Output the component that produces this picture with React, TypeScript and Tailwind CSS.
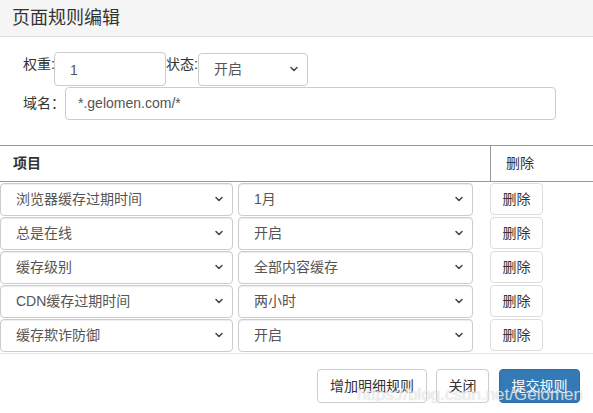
import { ChevronDown } from 'lucide-react';

const font = { fontFamily: '"Liberation Sans", "Noto Sans CJK SC", sans-serif' };

interface Rule {
  item: string;
  value: string;
}

const rules: Rule[] = [
  { item: '浏览器缓存过期时间', value: '1月' },
  { item: '总是在线', value: '开启' },
  { item: '缓存级别', value: '全部内容缓存' },
  { item: 'CDN缓存过期时间', value: '两小时' },
  { item: '缓存欺诈防御', value: '开启' },
];

// select box with a small chevron drawn over the right edge
function SelectBox({ value, className }: { value: string; className: string }) {
  return (
    <div
      className={`relative flex items-center border border-[#ccc] rounded-[4px] bg-white text-[14px] text-[#555] shadow-[inset_0_1px_1px_rgba(0,0,0,0.075)] ${className}`}
    >
      <span>{value}</span>
      <ChevronDown className="absolute right-[7px] top-1/2 -translate-y-1/2 w-[12px] h-[12px] text-[#444]" strokeWidth={3} />
    </div>
  );
}

export default function App() {
  return (
    <div className="relative w-[593px] h-[413px] bg-white text-[#333] overflow-hidden" style={font}>
      {/* Header */}
      <div className="h-[37px] bg-[#f5f5f5] border-b border-[#ddd] flex items-center pl-[12px]">
        <h2 className="text-[18px] text-[#333]">页面规则编辑</h2>
      </div>

      {/* Form */}
      <div className="pt-[15px] pl-[23px] text-[14px]">
        <div className="flex items-center">
          <span className="w-[31px] shrink-0 whitespace-nowrap -mt-[10px]">权重:</span>
          <div className="w-[112px] h-[34px] shrink-0 border border-[#ccc] rounded-[4px] flex items-center pl-[15px] pt-[2px] text-[#555]">1</div>
          <span className="w-[32px] shrink-0 whitespace-nowrap -mt-[10px]">状态:</span>
          <div className="w-[110px] h-[33px] shrink-0 border border-[#ccc] rounded-[4px] flex items-center pl-[15px] text-[#555] relative">
            开启
            <ChevronDown className="absolute right-[7px] top-1/2 -translate-y-1/2 w-[12px] h-[12px] text-[#444]" strokeWidth={3} />
          </div>
        </div>
        <div className="flex items-center mt-px">
          <span className="w-[42px] shrink-0 whitespace-nowrap">域名：</span>
          <div className="w-[491px] h-[33px] border border-[#ccc] rounded-[4px] flex items-center pl-[12px] text-[#555]">
            *.gelomen.com/*
          </div>
        </div>
      </div>

      {/* Table */}
      <div className="mt-[25px] text-[14px]">
        <div className="flex h-[37px] border-t border-b border-[#999]">
          <div className="w-[490px] flex items-center pl-[13px] font-bold">项目</div>
          <div className="flex-1 flex items-center pl-[15px] border-l border-[#999]">删除</div>
        </div>
        <div className="flex flex-col">
          {rules.map((rule) => (
            <div key={rule.item} className="flex items-center h-[34px]">
              <SelectBox value={rule.item} className="w-[233px] h-[33px] pl-[15px]" />
              <SelectBox value={rule.value} className="ml-[5px] w-[235px] h-[33px] pl-[15px]" />
              <button className="ml-[17px] w-[53px] h-[32px] border border-[#ddd] rounded-[4px] bg-white text-[14px] text-[#333]">
                删除
              </button>
            </div>
          ))}
        </div>
      </div>

      {/* Footer */}
      <div className="border-t border-[#e5e5e5] mt-px pt-[15px] pr-[13px] flex justify-end gap-[9px] text-[14px]">
        <button className="w-[110px] h-[34px] border border-[#ccc] rounded-[4px] bg-white">增加明细规则</button>
        <button className="w-[53px] h-[34px] border border-[#ccc] rounded-[4px] bg-white">关闭</button>
        <button className="ml-px w-[81px] h-[34px] border border-[#2e6da4] rounded-[4px] bg-[#337ab7] text-white">
          提交规则
        </button>
      </div>

      {/* watermark */}
      <span className="absolute right-[10px] top-[382px] text-[17px] text-white/70 [text-shadow:0_0_1px_rgba(140,140,140,0.5)] pointer-events-none">
        https://blog.csdn.net/Gelomen
      </span>
    </div>
  );
}
